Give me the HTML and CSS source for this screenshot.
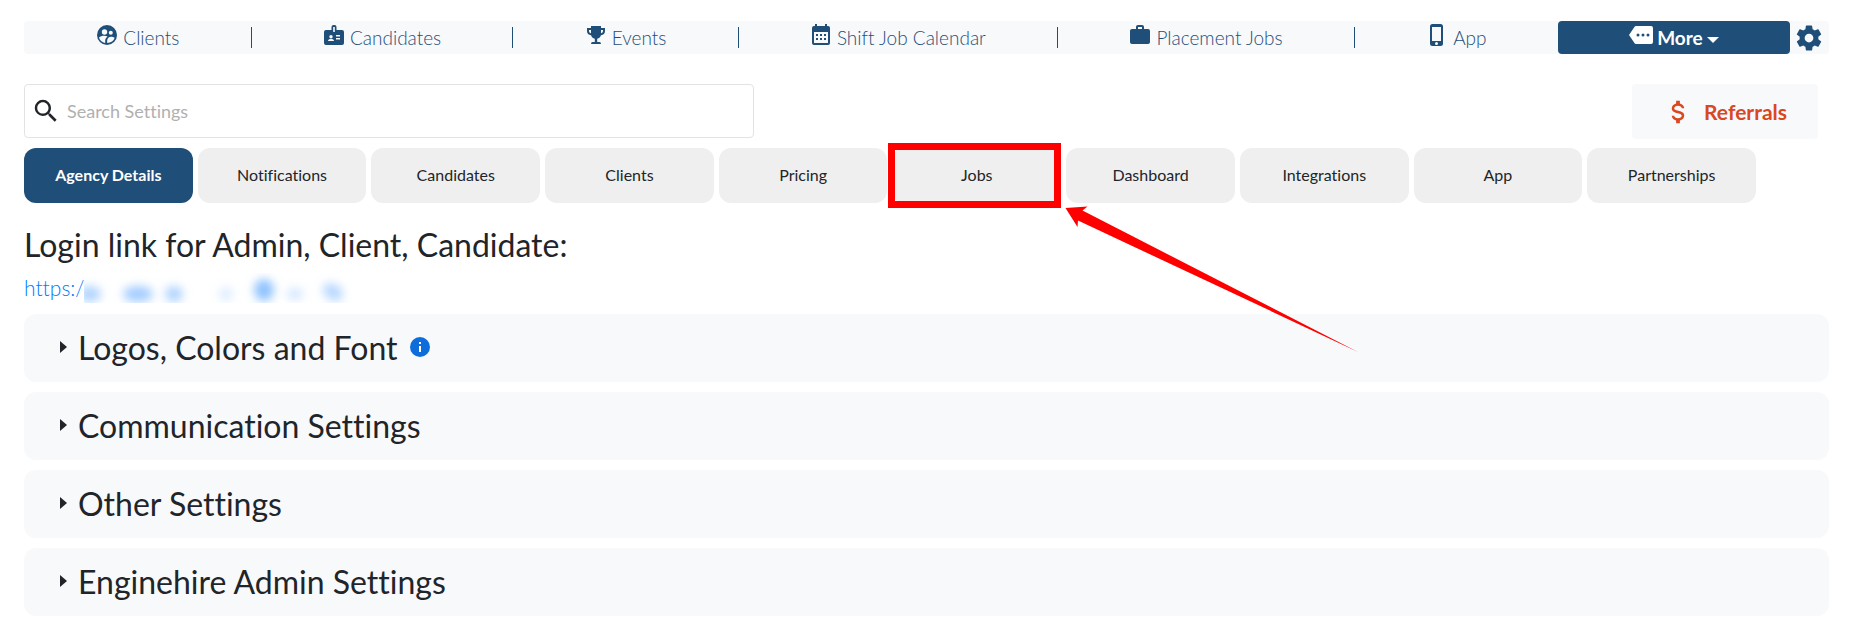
FILE: index.html
```html
<!DOCTYPE html>
<html lang="en">
<head>
<meta charset="utf-8">
<title>Agency Settings</title>
<link rel="stylesheet" href="styles.css">
</head>
<body>
<nav class="topnav" aria-label="Main">
  <a class="nav-item" href="#clients"><svg class="icon" viewBox="0 0 24 24"><circle cx="12" cy="12" r="10"/><g class="cut"><circle cx="9.5" cy="9" r="2.7"/><circle cx="15.8" cy="9.8" r="2"/><path d="M4 14.6C5.500 13 7.500 12.600 9.500 12.700C11 12.800 11.800 13.200 12.600 13.700C10.800 14.800 10.200 16 10.200 17.500V20C7 19.400 4.700 17.500 4 14.600Z"/><path d="M12.200 20V17.500C12.200 15 14 13.700 16 13.700C17.500 13.700 18.800 14.100 19.700 14.800C18.700 18 16 20 12.200 20Z"/></g></svg><span>Clients</span></a>
  <a class="nav-item" href="#candidates"><svg class="icon" viewBox="0 0 24 24"><path fill-rule="evenodd" d="M14.500 7V4a2 2 0 0 0-2-2h-1a2 2 0 0 0-2 2v3H4a2 2 0 0 0-2 2v11a2 2 0 0 0 2 2h16a2 2 0 0 0 2-2V9a2 2 0 0 0-2-2ZM11.200 4h1.600v5h-1.600ZM9 12a1.700 1.700 0 1 1 0 3.400A1.700 1.700 0 0 1 9 12ZM6 18c0-1.500 1.500-2 3-2s3 .5 3 2ZM14 12h4v1.500h-4ZM14 15h4v1.500h-4Z"/></svg><span>Candidates</span></a>
  <a class="nav-item" href="#events"><svg class="icon" viewBox="0 0 24 24"><path fill-rule="evenodd" d="M7 3H17V5H21V8C21 10.500 19.500 12 17 12.300C16 14.500 15 15.300 13.200 15.700V19H15.500Q17 19 17 21H7Q7 19 8.500 19H10.800V15.700C9 15.300 8 14.500 7 12.300C4.500 12 3 10.500 3 8V5H7ZM5 7V8C5 9.100 5.800 9.900 7 10.300V7ZM19 7H17V10.300C18.200 9.900 19 9.100 19 8Z"/></svg><span>Events</span></a>
  <a class="nav-item" href="#calendar"><svg class="icon" viewBox="0 0 24 24"><path fill-rule="evenodd" d="M6 1h2v2h8V1h2v2h1a2 2 0 0 1 2 2v15a2 2 0 0 1-2 2H5a2 2 0 0 1-2-2V5a2 2 0 0 1 2-2h1ZM5 9v11h14V9ZM7 11h2v2H7ZM11 11h2v2h-2ZM15 11h2v2h-2ZM7 15h2v2H7ZM11 15h2v2h-2ZM15 15h2v2h-2Z"/></svg><span>Shift Job Calendar</span></a>
  <a class="nav-item" href="#placement"><svg class="icon" viewBox="0 0 24 24"><path fill-rule="evenodd" d="M10 2H14A2 2 0 0 1 16 4V6H20A2 2 0 0 1 22 8V19A2 2 0 0 1 20 21H4C2.890 21 2 20.100 2 19V8C2 6.890 2.890 6 4 6H8V4C8 2.890 8.890 2 10 2M14 6V4H10V6H14Z"/></svg><span>Placement Jobs</span></a>
  <a class="nav-item" href="#app"><svg class="icon" viewBox="0 0 24 24"><path fill-rule="evenodd" d="M16 18H7V4H16M11.500 22A1.500 1.500 0 0 1 10 20.500A1.500 1.500 0 0 1 11.500 19A1.500 1.500 0 0 1 13 20.500A1.500 1.500 0 0 1 11.500 22M15.500 1H7.500A2.500 2.500 0 0 0 5 3.500V20.500A2.500 2.500 0 0 0 7.500 23H15.500A2.500 2.500 0 0 0 18 20.500V3.500A2.500 2.500 0 0 0 15.500 1Z"/></svg><span>App</span></a>
  <button class="nav-item nav-more" type="button" aria-haspopup="true"><svg class="icon" viewBox="0 0 24 24"><path fill-rule="evenodd" d="M22 3H7C6.310 3 5.770 3.350 5.410 3.880L0 12L5.410 20.110C5.770 20.640 6.310 21 7 21H22A2 2 0 0 0 24 19V5A2 2 0 0 0 22 3M9 13.500A1.500 1.500 0 1 1 9 10.500A1.500 1.500 0 0 1 9 13.500M14 13.500A1.500 1.500 0 1 1 14 10.500A1.500 1.500 0 0 1 14 13.500M19 13.500A1.500 1.500 0 1 1 19 10.500A1.500 1.500 0 0 1 19 13.500Z"/></svg><span>More</span><i class="caret"></i></button>
  <a class="nav-gear" href="#settings" aria-label="Settings"><svg class="icon-lg" viewBox="0 0 24 24"><path d="M12,15.500A3.500,3.500 0 0,1 8.500,12A3.500,3.500 0 0,1 12,8.500A3.500,3.500 0 0,1 15.500,12A3.500,3.500 0 0,1 12,15.500M19.430,12.970C19.470,12.650 19.500,12.330 19.500,12C19.500,11.670 19.470,11.340 19.430,11L21.540,9.370C21.730,9.220 21.780,8.950 21.660,8.730L19.660,5.270C19.540,5.050 19.270,4.960 19.050,5.050L16.560,6.050C16.040,5.660 15.500,5.320 14.870,5.070L14.500,2.420C14.460,2.180 14.250,2 14,2H10C9.750,2 9.540,2.180 9.500,2.420L9.130,5.070C8.500,5.320 7.960,5.660 7.440,6.050L4.950,5.050C4.730,4.960 4.460,5.050 4.340,5.270L2.340,8.730C2.210,8.950 2.270,9.220 2.460,9.370L4.570,11C4.530,11.340 4.500,11.670 4.500,12C4.500,12.330 4.530,12.650 4.570,12.970L2.460,14.630C2.270,14.780 2.210,15.050 2.340,15.270L4.340,18.730C4.460,18.950 4.730,19.030 4.950,18.950L7.440,17.940C7.960,18.340 8.500,18.680 9.130,18.930L9.500,21.580C9.540,21.820 9.750,22 10,22H14C14.250,22 14.460,21.820 14.500,21.580L14.870,18.930C15.500,18.670 16.040,18.340 16.560,17.940L19.050,18.950C19.270,19.030 19.540,18.950 19.660,18.730L21.660,15.270C21.780,15.050 21.730,14.780 21.540,14.630L19.430,12.970Z"/></svg></a>
</nav>

<main>
  <div class="toolbar">
    <label class="search">
      <svg class="icon-lg" viewBox="0 0 24 24"><path d="M9.500,3A6.500,6.500 0 0,1 16,9.500C16,11.110 15.410,12.590 14.440,13.730L14.710,14H15.500L20.500,19L19,20.500L14,15.500V14.710L13.730,14.440C12.590,15.410 11.110,16 9.500,16A6.500,6.500 0 0,1 3,9.500A6.500,6.500 0 0,1 9.500,3M9.500,5C7,5 5,7 5,9.500C5,12 7,14 9.500,14C12,14 14,12 14,9.500C14,7 12,5 9.500,5Z"/></svg>
      <input type="search" placeholder="Search Settings" aria-label="Search Settings">
    </label>
    <a class="referrals" href="#referrals"><svg class="icon-lg" viewBox="0 0 24 24"><path d="M7,15H9C9,16.080 10.370,17 12,17C13.630,17 15,16.080 15,15C15,13.900 13.960,13.500 11.760,12.970C9.640,12.440 7,11.780 7,9C7,7.210 8.470,5.690 10.500,5.180V3H13.500V5.180C15.530,5.690 17,7.210 17,9H15C15,7.920 13.630,7 12,7C10.370,7 9,7.920 9,9C9,10.100 10.040,10.500 12.240,11.030C14.360,11.560 17,12.220 17,15C17,16.790 15.530,18.310 13.500,18.820V21H10.500V18.820C8.470,18.310 7,16.790 7,15Z"/></svg><span>Referrals</span></a>
  </div>

  <ul class="tabs">
    <li><button class="tab active" type="button">Agency Details</button></li>
    <li><button class="tab" type="button">Notifications</button></li>
    <li><button class="tab" type="button">Candidates</button></li>
    <li><button class="tab" type="button">Clients</button></li>
    <li><button class="tab" type="button">Pricing</button></li>
    <li><button class="tab" type="button">Jobs</button>
      <div class="callout"><svg class="arrow" width="310" height="156" viewBox="0 0 310 156"><path d="M11.500 7L33.500 5.500L28.500 9.500L304 151L24 19.500L23.500 26Z"/></svg></div></li>
    <li><button class="tab" type="button">Dashboard</button></li>
    <li><button class="tab" type="button">Integrations</button></li>
    <li><button class="tab" type="button">App</button></li>
    <li><button class="tab" type="button">Partnerships</button></li>
  </ul>

  <h1 class="title">Login link for Admin, Client, Candidate:</h1>
  <a class="login-link" href="#login"><span>https:/</span><svg class="redacted" width="306" height="30" viewBox="0 0 306 30" aria-hidden="true"><defs><filter id="soft" x="-50%" y="-50%" width="200%" height="200%"><feGaussianBlur stdDeviation="5"/></filter></defs><g filter="url(#soft)"><ellipse cx="6" cy="21" rx="11" ry="8" opacity=".6"/><ellipse cx="54" cy="21" rx="15" ry="8" opacity=".7"/><ellipse cx="90" cy="21" rx="9" ry="8" opacity=".6"/><ellipse cx="142" cy="21" rx="7" ry="7" opacity=".25"/><ellipse cx="180" cy="17" rx="10" ry="11" opacity=".85"/><ellipse cx="211" cy="21" rx="8" ry="6" opacity=".35"/><ellipse cx="249" cy="19" rx="11" ry="8" opacity=".55" transform="rotate(35 249 19)"/></g></svg></a>

  <div class="panels">
    <details class="panel"><summary><span>Logos, Colors and Font</span><svg class="info" viewBox="0 0 20 20" role="img" aria-label="Info"><circle cx="10" cy="10" r="10"/><path d="M9 5h2v2H9zM9 9h2v6H9z"/></svg></summary></details>
    <details class="panel"><summary><span>Communication Settings</span></summary></details>
    <details class="panel"><summary><span>Other Settings</span></summary></details>
    <details class="panel"><summary><span>Enginehire Admin Settings</span></summary></details>
  </div>
</main>
</body>
</html>
```
FILE: styles.css
```css
:root {
  --navy: #1f4e78;
  --pale: #f8f9fb;
  --ink: #212529;
}

* { box-sizing: border-box; }

body {
  margin: 0;
  padding: 21px 43px 3px 24px;
  background: #fff;
  color: var(--ink);
  font-family: Lato, "Noto Sans", sans-serif;
  font-size: 18px;
  font-variant-ligatures: none;
  overflow-x: hidden;
}

button, input { font: inherit; font-variant-ligatures: none; color: inherit; }
svg { flex: none; fill: currentColor; }
a { text-decoration: none; }

.icon { width: 24px; height: 24px; margin-bottom: 6px; }
.icon-lg { width: 30px; height: 30px; }
.cut { fill: var(--pale); }

.topnav {
  display: flex;
  height: 33px;
  background: var(--pale);
  border-radius: 4px;
}

.nav-item {
  position: relative;
  display: flex;
  flex: 1 1 auto;
  align-items: center;
  justify-content: center;
  gap: 4px;
  padding: 0;
  color: var(--navy);
  font-size: 19px;
  font-weight: 300;
}

.nav-item + a.nav-item::before {
  content: "";
  position: absolute;
  left: 0;
  top: 6px;
  bottom: 6px;
  width: 1px;
  background: var(--navy);
}

.nav-more {
  border: 0;
  border-radius: 4px;
  background: var(--navy);
  color: #fff;
  font-weight: 700;
}

.caret {
  margin-top: 5px;
  border: 6px solid transparent;
  border-top-color: #fff;
  border-bottom: 0;
}

.nav-gear {
  display: flex;
  align-items: center;
  justify-content: center;
  width: 39px;
  color: var(--navy);
}

.toolbar {
  display: flex;
  justify-content: space-between;
  margin-top: 30px;
  padding-right: 11px;
}

.search {
  display: flex;
  align-items: center;
  gap: 6px;
  width: 730px;
  height: 54px;
  padding: 0 6px;
  border: 1px solid #e3e3e3;
  border-radius: 4px;
}

.search input {
  flex: 1;
  padding: 0;
  border: 0;
  outline: 0;
  background: none;
}

.search input::placeholder { color: #b0b0b0; opacity: 1; }

.referrals {
  display: flex;
  align-items: center;
  gap: 11px;
  height: 55px;
  padding: 0 31px;
  border-radius: 4px;
  background: var(--pale);
  color: #d9481f;
  font-size: 21px;
  font-weight: 700;
}

.tabs {
  display: grid;
  grid-template-columns: repeat(10, 1fr);
  gap: 5px;
  margin: 9px 73px 0 0;
  padding: 0;
  list-style: none;
}

.tabs li { position: relative; }

.tab {
  display: block;
  width: 100%;
  height: 55px;
  padding: 0 0 2px;
  border: 0;
  border-radius: 12px;
  background: #efefef;
  font-size: 16px;
}

.tab.active {
  background: var(--navy);
  color: #fff;
  font-weight: 700;
}

.callout {
  position: absolute;
  z-index: 1;
  inset: -5px 0 -5px -4px;
  border: 7px solid #f00;
  pointer-events: none;
}

.arrow {
  position: absolute;
  left: 100%;
  top: 100%;
  fill: #f00;
}

.title {
  margin: 24px 0 0;
  font-size: 32px;
  font-weight: 400;
  line-height: 36px;
}

.login-link {
  display: flex;
  height: 30px;
  margin-top: 10px;
  color: #007bff;
  font-size: 21px;
  line-height: 30px;
  font-weight: 300;
}

.redacted { fill: #7db8ff; }

.panels {
  display: grid;
  gap: 10px;
  margin-top: 11px;
}

.panel {
  border-radius: 12px;
  background: var(--pale);
}

.panel summary {
  display: flex;
  align-items: center;
  height: 68px;
  padding: 0 0 2px 36px;
  font-size: 32px;
  cursor: pointer;
  list-style: none;
}

.panel summary::-webkit-details-marker { display: none; }

.panel summary::before {
  content: "";
  margin-right: 11px;
  border: 6px solid transparent;
  border-left: 7px solid var(--ink);
  border-right: 0;
}

.info {
  width: 20px;
  height: 20px;
  margin-left: 12px;
  fill: #0d6edb;
}

.info path { fill: #fff; }
```
